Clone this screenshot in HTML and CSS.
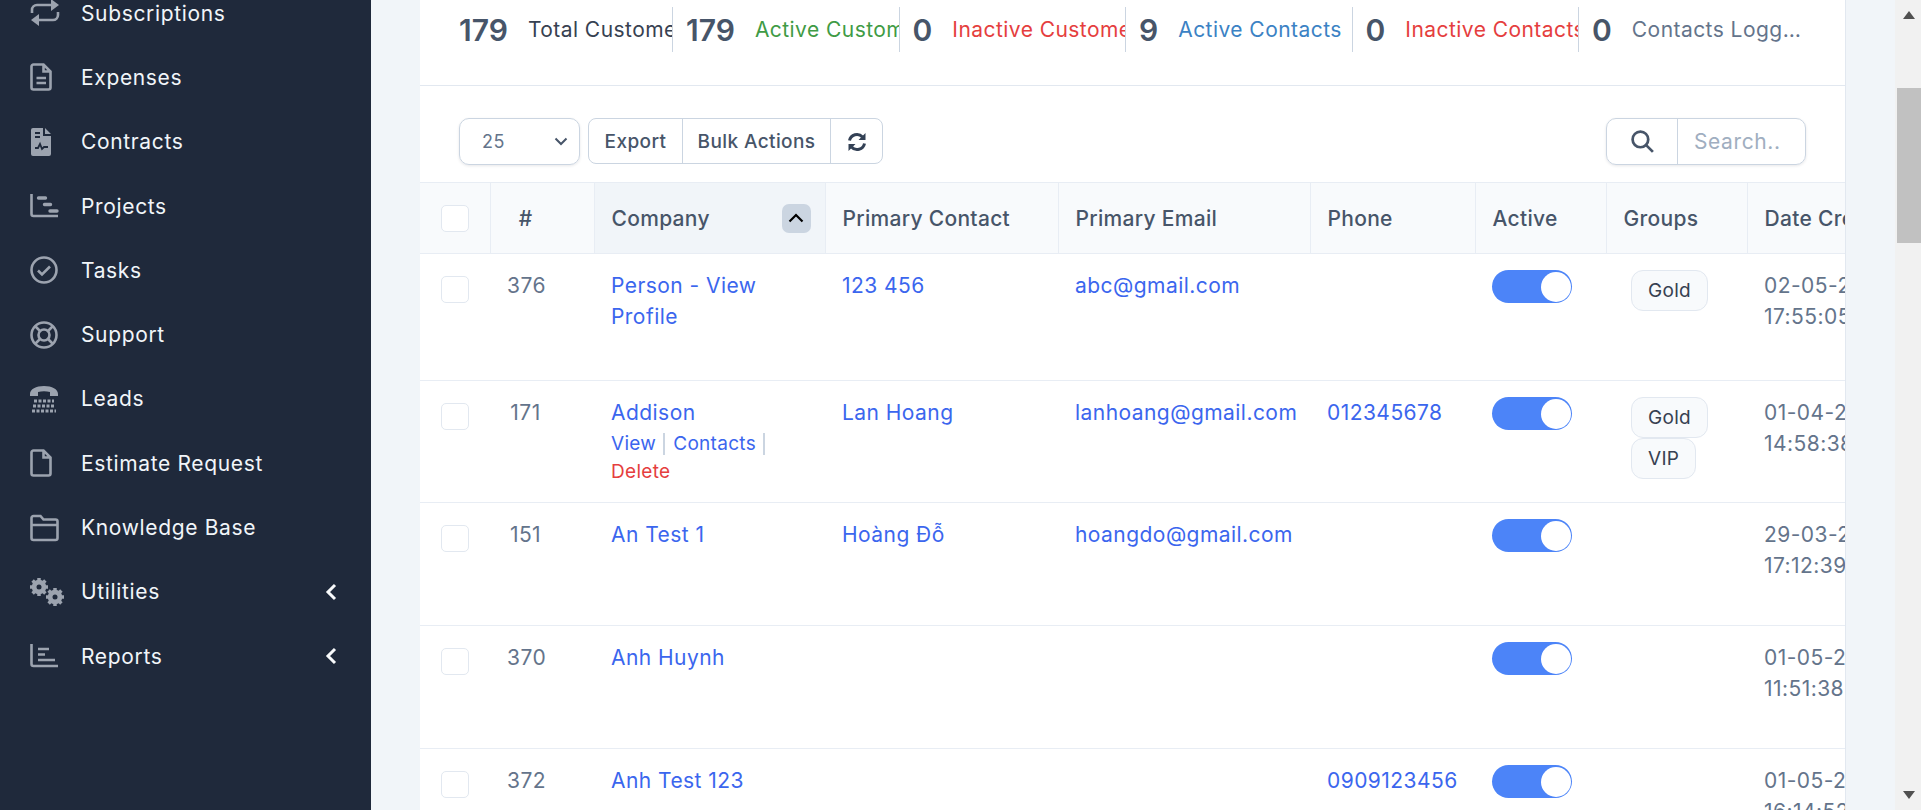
FILE: index.html
```html
<!DOCTYPE html>
<html lang="en">
<head>
    <meta charset="UTF-8">
    <title>Customers</title>
    <link rel="stylesheet" href="styles.css">
</head>
<body>

    <aside class="sidebar">
        <ul class="nav">
            <li class="nav-item">
                <svg class="nav-icon" viewBox="0 0 36 28"><path class="line" d="M2 14v-3a5 5 0 0 1 5-5h16M28 13v3a5 5 0 0 1-5 5H8"/><path class="solid" d="M21 0l8 6-8 6zM9 15l-8 6 8 6z"/></svg>
                <span>Subscriptions</span>
            </li>
            <li class="nav-item">
                <svg class="nav-icon" viewBox="0 0 36 28"><path class="line" d="M3.500 1.500h10l7 7v16a2 2 0 0 1-2 2h-15a2 2 0 0 1-2-2v-21a2 2 0 0 1 2-2zM13.500 1.500v7h7"/><path class="line" d="M6.500 15h9.500M6.500 20h9.500"/></svg>
                <span>Expenses</span>
            </li>
            <li class="nav-item">
                <svg class="nav-icon" viewBox="0 0 36 28"><path class="solid" d="M3 0h10v8h8v18a2 2 0 0 1-2 2H3a2 2 0 0 1-2-2V2a2 2 0 0 1 2-2zM15 0l6 6h-6z"/><path class="cut" d="M5 5h5M5 9h5M5 20h3l2-4 2 5 2-2h4"/></svg>
                <span>Contracts</span>
            </li>
            <li class="nav-item">
                <svg class="nav-icon" viewBox="0 0 36 28"><path class="line" d="M1.500 2v20a2 2 0 0 0 2 2h24.500"/><path class="bar" d="M8.500 6h7M14.500 12.500h6M20 19h7"/></svg>
                <span>Projects</span>
            </li>
            <li class="nav-item">
                <svg class="nav-icon" viewBox="0 0 36 28"><circle class="line" cx="14" cy="14" r="12.500"/><path class="line" d="M8 14.500l4 4 8-8"/></svg>
                <span>Tasks</span>
            </li>
            <li class="nav-item">
                <svg class="nav-icon" viewBox="0 0 36 28"><circle class="line" cx="14" cy="14" r="12.500"/><circle class="line" cx="14" cy="14" r="5.500"/><path class="line" d="M5 5l5 5M23 5l-5 5M5 23l5-5M23 23l-5-5"/></svg>
                <span>Support</span>
            </li>
            <li class="nav-item">
                <svg class="nav-icon" viewBox="0 0 36 28"><path class="solid" d="M0 9c0-5 6-8 14-8s14 3 14 8v2h-8V7c-4-1-8-1-12 0v4H0z"/><path class="dots" d="M4 16h20M3 21h22M2 26h24"/></svg>
                <span>Leads</span>
            </li>
            <li class="nav-item">
                <svg class="nav-icon" viewBox="0 0 36 28"><path class="line" d="M3.500 1.500h10l7 7v16a2 2 0 0 1-2 2h-15a2 2 0 0 1-2-2v-21a2 2 0 0 1 2-2zM13.500 1.500v7h7"/></svg>
                <span>Estimate Request</span>
            </li>
            <li class="nav-item">
                <svg class="nav-icon" viewBox="0 0 36 28"><path class="line" d="M1.500 11V4a2 2 0 0 1 2-2h7l3 3.500h12a2 2 0 0 1 2 2V24a2 2 0 0 1-2 2h-22a2 2 0 0 1-2-2zM1.500 11h26"/></svg>
                <span>Knowledge Base</span>
            </li>
            <li class="nav-item">
                <svg class="nav-icon" viewBox="0 0 36 28"><g class="gear"><circle cx="9" cy="9" r="5.500"/><path d="M9 0v18M0 9h18M2.600 2.600l12.800 12.800M15.400 2.600L2.600 15.400"/></g><g class="gear"><circle cx="25" cy="19" r="5.500"/><path d="M25 10v18M16 19h18M18.600 12.600l12.800 12.800M31.400 12.600L18.600 25.400"/></g><circle class="hole" cx="9" cy="9" r="2.500"/><circle class="hole" cx="25" cy="19" r="2.500"/></svg>
                <span>Utilities</span>
                <svg class="nav-chevron" viewBox="0 0 12 18"><path d="M10 2L3 9l7 7"/></svg>
            </li>
            <li class="nav-item">
                <svg class="nav-icon" viewBox="0 0 36 28"><path class="line" d="M1.500 2v20a2 2 0 0 0 2 2h24.500"/><path class="line" d="M8 7h11M8 12.500h7M8 18h17"/></svg>
                <span>Reports</span>
                <svg class="nav-chevron" viewBox="0 0 12 18"><path d="M10 2L3 9l7 7"/></svg>
            </li>
        </ul>
    </aside>

    <main class="main">
        <section class="panel">
            <div class="stats">
                <div class="stat"><b>179</b><span class="stat-label dark">Total Customers</span></div>
                <div class="stat"><b>179</b><span class="stat-label green">Active Customers</span></div>
                <div class="stat"><b>0</b><span class="stat-label red">Inactive Customers</span></div>
                <div class="stat"><b>9</b><span class="stat-label blue">Active Contacts</span></div>
                <div class="stat"><b>0</b><span class="stat-label red">Inactive Contacts</span></div>
                <div class="stat"><b>0</b><span class="stat-label gray">Contacts Logged In Today</span></div>
            </div>

            <div class="toolbar">
                <div class="page-size">
                    <span>25</span>
                    <svg viewBox="0 0 14 9"><path d="M1.500 1.500L7 7l5.500-5.500"/></svg>
                </div>
                <div class="btn-group">
                    <button class="btn-export">Export</button>
                    <button class="btn-bulk">Bulk Actions</button>
                    <button class="btn-reload">
                        <svg viewBox="0 0 20 20"><path class="reload" d="M2.500 8.500A7.500 7.500 0 0 1 15.500 5M17.500 11.500A7.500 7.500 0 0 1 4.500 15"/><path class="reload-tip" d="M18.500 1v7h-7zM1.500 19v-7h7z"/></svg>
                    </button>
                </div>
                <div class="search">
                    <span class="search-icon">
                        <svg viewBox="0 0 24 24"><circle cx="10" cy="10" r="7.500"/><path d="M15.500 15.500L22 22"/></svg>
                    </span>
                    <input type="text" placeholder="Search..">
                </div>
            </div>

            <div class="table-wrap">
                <table class="customers">
                    <colgroup>
                        <col class="col-check"><col class="col-id"><col class="col-company"><col class="col-contact">
                        <col class="col-email"><col class="col-phone"><col class="col-active"><col class="col-groups"><col class="col-date">
                    </colgroup>
                    <thead>
                        <tr>
                            <th class="cell-check"><span class="checkbox"></span></th>
                            <th class="cell-id">#</th>
                            <th class="cell-sorted">
                                <div class="sort-head">
                                    <span>Company</span>
                                    <span class="sort-btn"><svg viewBox="0 0 16 10"><path d="M1.500 8.500L8 2l6.500 6.500"/></svg></span>
                                </div>
                            </th>
                            <th>Primary Contact</th>
                            <th>Primary Email</th>
                            <th>Phone</th>
                            <th>Active</th>
                            <th>Groups</th>
                            <th>Date Created</th>
                        </tr>
                    </thead>
                    <tbody>
                        <tr class="row-127">
                            <td class="cell-check"><span class="checkbox"></span></td>
                            <td class="cell-id">376</td>
                            <td><a href="#">Person - View Profile</a></td>
                            <td><a href="#">123 456</a></td>
                            <td><a href="#">abc@gmail.com</a></td>
                            <td></td>
                            <td><span class="toggle"></span></td>
                            <td><span class="badge">Gold</span></td>
                            <td>02-05-2023 17:55:05</td>
                        </tr>
                        <tr class="row-122">
                            <td class="cell-check"><span class="checkbox"></span></td>
                            <td class="cell-id">171</td>
                            <td>
                                <a href="#">Addison</a>
                                <div class="row-actions">
                                    <a href="#" class="action">View</a><a href="#" class="action">Contacts</a><a href="#" class="action-delete">Delete</a>
                                </div>
                            </td>
                            <td><a href="#">Lan Hoang</a></td>
                            <td><a href="#">lanhoang@gmail.com</a></td>
                            <td><a href="#">012345678</a></td>
                            <td><span class="toggle"></span></td>
                            <td><span class="badge">Gold</span><span class="badge">VIP</span></td>
                            <td>01-04-2023 14:58:38</td>
                        </tr>
                        <tr class="row-123">
                            <td class="cell-check"><span class="checkbox"></span></td>
                            <td class="cell-id">151</td>
                            <td><a href="#">An Test 1</a></td>
                            <td><a href="#">Hoàng Đỗ</a></td>
                            <td><a href="#">hoangdo@gmail.com</a></td>
                            <td></td>
                            <td><span class="toggle"></span></td>
                            <td></td>
                            <td>29-03-2023 17:12:39</td>
                        </tr>
                        <tr class="row-123">
                            <td class="cell-check"><span class="checkbox"></span></td>
                            <td class="cell-id">370</td>
                            <td><a href="#">Anh Huynh</a></td>
                            <td></td>
                            <td></td>
                            <td></td>
                            <td><span class="toggle"></span></td>
                            <td></td>
                            <td>01-05-2023 11:51:38</td>
                        </tr>
                        <tr class="row-123">
                            <td class="cell-check"><span class="checkbox"></span></td>
                            <td class="cell-id">372</td>
                            <td><a href="#">Anh Test 123</a></td>
                            <td></td>
                            <td></td>
                            <td><a href="#">0909123456</a></td>
                            <td><span class="toggle"></span></td>
                            <td></td>
                            <td>01-05-2023 16:14:52</td>
                        </tr>
                    </tbody>
                </table>
            </div>
        </section>
    </main>

    <div class="scrollbar">
        <span class="arrow-up"></span>
        <span class="thumb"></span>
        <span class="arrow-down"></span>
    </div>

</body>
</html>
```
FILE: styles.css
```css
* {
    box-sizing: border-box;
}
html, body {
    height: 810px;
    overflow: hidden;
}
body {
    margin: 0;
    display: flex;
    font-family: Inter, "Noto Sans", sans-serif;
    font-size: 21px;
    letter-spacing: 0.45px;
    color: #64748b;
    background: #f1f5f9;
}
a {
    color: #3b66ee;
    text-decoration: none;
}

/* sidebar */
.sidebar {
    width: 371px;
    flex-shrink: 0;
    background: #1f293b;
    overflow: hidden;
}
.nav {
    list-style: none;
    margin: -19px 0 0;
    padding: 0;
}
.nav-item {
    height: 64.3px;
    padding: 0 34px 0 30px;
    display: flex;
    align-items: center;
    color: #f1f5f9;
    letter-spacing: 0.65px;
}
.nav-icon {
    width: 36px;
    height: 28px;
    margin-right: 15px;
    flex-shrink: 0;
    overflow: visible;
}
.nav-icon .line {
    fill: none;
    stroke: #9ca3af;
    stroke-width: 2.6;
}
.nav-icon .bar {
    fill: none;
    stroke: #9ca3af;
    stroke-width: 3.400;
    stroke-linecap: round;
}
.nav-icon .solid {
    fill: #9ca3af;
}
.nav-icon .cut {
    fill: none;
    stroke: #1f293b;
    stroke-width: 1.800;
}
.nav-icon .dots {
    fill: none;
    stroke: #9ca3af;
    stroke-width: 3;
    stroke-dasharray: 3 1.500;
}
.gear {
    fill: #9ca3af;
    stroke: #9ca3af;
    stroke-width: 3.500;
}
.hole {
    fill: #1f293b;
}
.nav-chevron {
    width: 12px;
    height: 18px;
    margin-left: auto;
    fill: none;
    stroke: #f8fafc;
    stroke-width: 3;
}

/* main area */
.main {
    flex: 1;
    min-width: 0;
    padding: 0 49px;
}
.panel {
    height: 810px;
    overflow: hidden;
    background: #fff;
    border-right: 1px solid #e2e8f0;
}

/* stats */
.stats {
    height: 86px;
    padding: 7px 0 0 39px;
    display: flex;
    align-items: flex-start;
    border-bottom: 1px solid #e2e8f0;
}
.stat {
    width: 226.500px;
    height: 45px;
    padding-left: 13px;
    display: flex;
    align-items: center;
    border-right: 1px solid #cbd5e1;
}
.stat:first-child {
    width: 214px;
    padding-left: 0;
}
.stat:last-child {
    width: 228px;
    border-right: none;
}
.stat b {
    font-size: 30px;
    font-weight: 600;
    letter-spacing: 0;
    color: #475569;
    margin-right: 20px;
    flex-shrink: 0;
}
.stat-label {
    white-space: nowrap;
    overflow: hidden;
}
.stat:last-child .stat-label {
    text-overflow: ellipsis;
}
.dark { color: #374151; }
.green { color: #3f9b45; }
.red { color: #e53e3e; }
.blue { color: #3b82c4; }
.gray { color: #64748b; }

/* toolbar */
.toolbar {
    height: 96px;
    padding: 32px 39px 0 39px;
    display: flex;
    align-items: flex-start;
}
.page-size {
    width: 121px;
    height: 47px;
    margin-right: 8px;
    padding: 0 11px 0 22px;
    display: flex;
    align-items: center;
    justify-content: space-between;
    border: 1px solid #cbd5e1;
    border-radius: 10px;
    box-shadow: 0 1px 3px rgba(15, 23, 42, 0.1);
    font-size: 18px;
}
.page-size svg {
    width: 14px;
    height: 9px;
    fill: none;
    stroke: #475569;
    stroke-width: 2;
}
.btn-group {
    display: flex;
    height: 46px;
    border: 1px solid #cbd5e1;
    border-radius: 8px;
}
.btn-group button {
    height: 100%;
    padding: 0;
    border: none;
    border-right: 1px solid #cbd5e1;
    background: none;
    font-family: inherit;
    font-size: 19px;
    letter-spacing: 0.4px;
    font-weight: 500;
    color: #475569;
}
.btn-group button:last-child {
    border-right: none;
}
.btn-export { width: 94px; }
.btn-bulk { width: 148px; }
.btn-reload { width: 51px; }
.btn-reload svg {
    width: 20px;
    height: 20px;
    vertical-align: middle;
}
.reload {
    fill: none;
    stroke: #334155;
    stroke-width: 3;
}
.reload-tip {
    fill: #334155;
}
.search {
    width: 200px;
    height: 47px;
    margin-left: auto;
    display: flex;
    border: 1px solid #cbd5e1;
    border-radius: 10px;
    box-shadow: 0 1px 3px rgba(15, 23, 42, 0.1);
}
.search-icon {
    width: 71px;
    display: flex;
    align-items: center;
    justify-content: center;
    border-right: 1px solid #cbd5e1;
}
.search-icon svg {
    width: 25px;
    height: 25px;
    fill: none;
    stroke: #475569;
    stroke-width: 2.6;
}
.search input {
    flex: 1;
    min-width: 0;
    padding: 0 0 0 16px;
    border: none;
    outline: none;
    background: none;
    font-family: inherit;
    font-size: 21px;
    letter-spacing: 0.6px;
}
.search input::placeholder {
    color: #a0aec0;
}

/* table */
.table-wrap {
    overflow: hidden;
}
.customers {
    width: 1500px;
    table-layout: fixed;
    border-collapse: collapse;
}
.col-check { width: 70px; }
.col-id { width: 104px; }
.col-company { width: 231px; }
.col-contact { width: 233px; }
.col-email { width: 252px; }
.col-phone { width: 165px; }
.col-active { width: 131px; }
.col-groups { width: 141px; }
.col-date { width: 173px; }
.customers th {
    height: 71px;
    padding: 0 17px;
    background: #f8fafc;
    border: 1px solid #e8edf4;
    border-left: none;
    text-align: left;
    font-weight: 500;
    letter-spacing: 0.3px;
    color: #475569;
    white-space: nowrap;
}
.customers td {
    padding: 16px 17px 0;
    vertical-align: top;
    line-height: 31px;
    border-bottom: 1px solid #e8edf4;
}
.row-127 td { height: 127px; }
.row-122 td { height: 122px; }
.row-123 td { height: 123px; }
.customers .cell-check {
    padding-left: 21px;
    padding-right: 0;
}
.customers .cell-id {
    padding-left: 17px;
    padding-right: 50px;
    text-align: center;
}
.customers .cell-sorted {
    background: #f1f5f9;
    padding-right: 14px;
}
.sort-head {
    display: flex;
    align-items: center;
    justify-content: space-between;
}
.sort-btn {
    width: 29px;
    height: 29px;
    display: flex;
    align-items: center;
    justify-content: center;
    background: #cbd5e1;
    border-radius: 7px;
}
.sort-btn svg {
    width: 16px;
    height: 10px;
    fill: none;
    stroke: #000;
    stroke-width: 2.2;
}
.checkbox {
    display: block;
    width: 28px;
    height: 27px;
    background: #fff;
    border: 1px solid #e2e8f0;
    border-radius: 5px;
}
td .checkbox {
    margin-top: 6px;
}
.row-actions {
    margin-top: 2px;
    font-size: 19px;
    letter-spacing: 0.3px;
    line-height: 28px;
}
.action {
    display: inline-block;
    line-height: 22px;
    padding-right: 7px;
    margin-right: 8px;
    border-right: 2px solid #cbd5e1;
}
.action-delete {
    color: #e53e3e;
}
.toggle {
    display: block;
    position: relative;
    width: 80px;
    height: 33px;
    background: #4c84f8;
    border-radius: 17px;
}
.toggle::after {
    content: "";
    position: absolute;
    top: 1.500px;
    right: 1px;
    width: 30px;
    height: 30px;
    background: #fff;
    border-radius: 50%;
}
.badge {
    display: block;
    width: fit-content;
    height: 41px;
    margin-left: 8px;
    padding: 0 16px;
    line-height: 39px;
    font-size: 19px;
    letter-spacing: 0.3px;
    color: #374151;
    background: #f8fafc;
    border: 1px solid #e2e8f0;
    border-radius: 12px;
}

/* window scrollbar */
.scrollbar {
    width: 26px;
    flex-shrink: 0;
    padding: 11px 0 0 1px;
    display: flex;
    flex-direction: column;
    align-items: center;
    background: #f1f1f1;
}
.arrow-up {
    width: 0;
    height: 0;
    border: 6.500px solid transparent;
    border-top: none;
    border-bottom: 8px solid #505050;
}
.thumb {
    width: 24px;
    height: 155px;
    margin-top: 69px;
    background: #c1c1c1;
}
.arrow-down {
    width: 0;
    height: 0;
    margin-top: 548px;
    border: 6.500px solid transparent;
    border-bottom: none;
    border-top: 8px solid #505050;
}
```
